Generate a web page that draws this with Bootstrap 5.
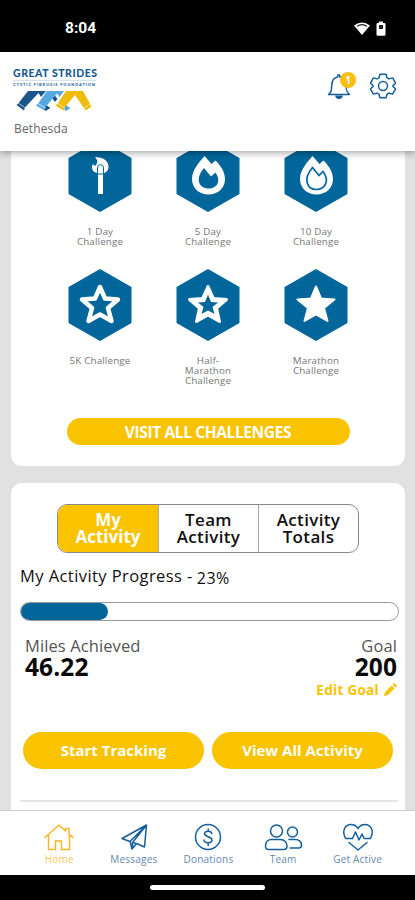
<!DOCTYPE html>
<html lang="en">
<head>
<meta charset="utf-8">
<meta name="viewport" content="width=device-width, initial-scale=1">
<title>Great Strides</title>
<link href="https://cdn.jsdelivr.net/npm/bootstrap@5.3.0/dist/css/bootstrap.min.css" rel="stylesheet">
<style>
:root{--gs-blue:#02669b;--gs-gold:#fac300;--gs-line:#145f99}
body{font-family:"Open Sans","Noto Sans",sans-serif;height:900px;color:#111;background:#e1e1e1}
svg{display:block;flex:none}
.status{height:52px;padding:5px 28px 0 65px;font:700 15.500px/1 Roboto,sans-serif}
.top-bar{height:99px;padding:15px 19px 0 13px;box-shadow:0 2px 7px rgba(0,0,0,.35);z-index:2}
.tools{margin-top:5px}
.chapter{font-size:12px;line-height:16px;margin:10px 0 0 1px;color:#666;letter-spacing:.15px}
.logo-name{font:900 10.5px/12px Lato,sans-serif;color:#175a92;letter-spacing:.55px}
.logo-sub{font:900 4px/5px Lato,sans-serif;color:#2a6699;letter-spacing:.88px;border-top:1px solid #d5e3ee;margin-top:1px;padding-top:1px;width:83px}
.bell{width:28px;height:28px;margin-right:15px}
.count{position:absolute;left:13px;top:0;width:16px;height:16px;font-size:10px;line-height:16px;background:#fdbd10}
.panel{margin:0 10px 0 11px;border-radius:11px}
.challenges{margin-top:-24px;height:339px;padding:12.5px 35px 0}
.cell-box{height:129.5px;font-size:9.8px;letter-spacing:.15px;line-height:10.2px;color:#777}
.cell-box span{margin-top:15px;width:56px}
.cell-box span.wide{width:80px}
.gold{background:var(--gs-gold);color:#fff;font-weight:700;border:0;padding:0}
.visit{width:283px;height:27px;font-size:15.500px;letter-spacing:-.37px;line-height:26px;margin-top:19.500px}
.activity{margin-top:17px;padding:20.5px 7px 0 9px;height:400px}
.tabs{width:302px;height:49px;margin:0 auto 0 37px;border:1px solid #888;border-radius:10px;font-size:17px;letter-spacing:.35px;line-height:17px;font-weight:600}
.tabs>div+div{border-left:1px solid #aaa}
.tabs .on{background:var(--gs-gold);color:#fff;font-weight:700;letter-spacing:0}
.prog-title{font-size:16.500px;letter-spacing:.42px;line-height:20px;margin-top:13px}
.pct{padding-top:2px;margin-left:4px;font-size:16px;letter-spacing:.5px}
.meter{height:19px;border:1px solid #999;border-radius:10px;margin-top:14.500px;background:#fff;margin-right:-1px}
.meter>div{background:var(--gs-blue);border-radius:10px}
.stats{padding:0 1px 0 5px;margin-top:15px;font-size:16.500px;letter-spacing:.1px;line-height:20px;color:#555}
.stats b{display:block;font-size:24.500px;line-height:22px;color:#0a0a0a}
.edit{font-size:13.500px;letter-spacing:.3px;font-weight:700;color:var(--gs-gold);line-height:18px;margin-top:3px}
.actions{margin:32.500px 5px 0 3px;gap:8px}
.actions .gold{height:37px;font-size:15px;line-height:36px}
.rule{height:2px;background:#e4e4e4;margin-top:31px}
.tab-bar{height:65px;border-top:1px solid #ccc;padding:11px 20px 0 22px;z-index:2;color:#6488ae;font-size:10px;letter-spacing:.2px}
.tab-bar .item{width:20%;line-height:13px}
.tab-bar svg{height:30px;margin-bottom:1px}
.line{fill:none;stroke:var(--gs-line);stroke-width:1.5;stroke-linejoin:round;stroke-linecap:round}
.home{color:#fbc85c}.home .line{stroke:#fbb625}
.gesture{height:25px;z-index:2}
.gesture div{width:115px;height:5px}
</style>
<script src="https://cdn.jsdelivr.net/npm/bootstrap@5.3.0/dist/js/bootstrap.bundle.min.js"></script>
</head>
<body class="d-flex flex-column overflow-hidden">
<div class="status bg-black text-white d-flex align-items-center justify-content-between flex-shrink-0">
  <span>8:04</span>
  <div class="d-flex gap-1 align-items-center">
    <svg width="18" height="16" viewBox="0 0 18 16"><path fill="#fff" d="M1 4.5Q9-1.5 17 4.5L9 14z"/><path d="M4 5.3Q9 2 14 5.3" stroke="#222" stroke-width="1.1" fill="none"/></svg>
    <svg width="12" height="16" viewBox="0 0 12 16"><path fill="#fff" d="M4 .5h4v1.5h1.2a1.3 1.3 0 0 1 1.3 1.3v10.2a1.3 1.3 0 0 1-1.3 1.3H2.8a1.3 1.3 0 0 1-1.3-1.3V3.3A1.3 1.3 0 0 1 2.8 2H4z"/><path fill="#222" d="M4 4h4v4H4z"/></svg>
  </div>
</div>
<header class="top-bar bg-white d-flex justify-content-between flex-shrink-0 position-relative">
  <div>
    <div class="logo-name text-nowrap">GREAT STRIDES</div>
    <div class="logo-sub text-nowrap">CYSTIC FIBROSIS FOUNDATION</div>
    <svg class="mt-1" width="84" height="20" viewBox="0 0 84 20">
      <path fill="#1b568b" d="M15 0h18l-5 6-2.500-4L12 16.500l-1 3L3.500 14l2.500-2.500z"/>
      <path fill="#1b568b" d="M32 13l5.500 4-5 3-3-3.500zM35 0h3.500l6 8-2.500 3-4-5.500z"/>
      <path fill="#56a8e2" d="M34 0h17l-4.500 6-2.500-3.500L32.500 16l-1 3.500-8.500-5 2.500-2.500z"/>
      <path fill="#56a8e2" d="M51 13l6.500 4-4.500 3-4-4z"/>
      <path fill="#efbc0b" d="M53 0h17l8.500 15.500-6 4L62 4 52 16l-1.500 3.500-8-5 2.500-2.500z"/>
      <path fill="none" stroke="#fff" stroke-width=".6" d="M4.500 11.500l8 5.500M24 12l8.500 5M44 12l8 5M70.500 17.500l7-4.500"/>
    </svg>
    <div class="chapter">Bethesda</div>
  </div>
  <div class="d-flex tools">
    <div class="bell position-relative">
      <svg width="28" height="28" viewBox="0 0 28 28"><path class="line" d="M1.500 22.500c3-2.500 3-4 3.200-9 .2-5 2.500-8 6-8.500V3.500q1-1.500 2 0V5c4 .5 6 4 6.200 8.500.2 5 .8 6.500 3.500 9z"/><path fill="#145f99" d="M8 23.500h8q-.8 3.500-4 3.500t-4-3.500z"/></svg>
      <span class="count rounded-circle text-white text-center fw-bold">1</span>
    </div>
    <svg width="26" height="28" viewBox="-13 -14 26 28"><circle class="line" r="4.500"/><path class="line" d="M-3-11.800h6l1 3.600 2 1.100 3.600-1 3 5.100L10-.5v1L12.600 3l-3 5.100-3.600-1-2 1.100-1 3.600h-6l-1-3.600-2-1.100-3.600 1-3-5.100L-10 .5v-1L-12.600-3l3-5.100 3.600 1 2-1.100z"/></svg>
  </div>
</header>
<main class="flex-grow-1 overflow-hidden" style="height:0">
  <section class="panel challenges bg-white">
    <div class="row g-0 text-center">
      <div class="col-4 cell-box d-flex flex-column align-items-center">
        <svg width="64" height="72" viewBox="0 0 64 72"><path fill="#02669b" d="M32 0l31.500 18v36L32 72 .5 54V18z"/><path fill="#fff" d="M27 17c8 0 14 4 13.500 10.500-.3 3-2 4.500-4.500 5.500v-3c0-6-7-6-7 0v3c-3-.6-5-2.500-5-5.500q0-2 1-3.500l2 2c2.500-2 3.500-5 0-9z"/><path fill="#fff" stroke="#02669b" d="M29.500 54.500V28q0-3.500 3-3.500t3 3.500v26.500z"/><path stroke="#02669b" d="M30 34h5"/></svg>
        <span>1 Day Challenge</span>
      </div>
      <div class="col-4 cell-box d-flex flex-column align-items-center">
        <svg width="64" height="72" viewBox="0 0 64 72"><path fill="#02669b" d="M32 0l31.500 18v36L32 72 .5 54V18z"/><path fill="#fff" d="M28.500 16l7 8 4-3.500C45 26 49 32 49 39c0 9-7 15.500-16.500 15.500S16 48 16 39c0-8.500 6.500-16 12.500-23z"/><path fill="#02669b" d="M28 28l7 8.500 4.500-4c6 9 1.500 16-7 16S18 40 28 28z"/></svg>
        <span>5 Day Challenge</span>
      </div>
      <div class="col-4 cell-box d-flex flex-column align-items-center">
        <svg width="64" height="72" viewBox="0 0 64 72"><path fill="#02669b" d="M32 0l31.500 18v36L32 72 .5 54V18z"/><path fill="#fff" d="M28.500 16l7 8 4-3.500C45 26 49 32 49 39c0 9-7 15.500-16.500 15.500S16 48 16 39c0-8.500 6.500-16 12.500-23z"/><path fill="#fff" stroke="#02669b" stroke-width="1.700" d="M28.500 27.500l6.500 8 4-4c7 9 2 18-6.500 18S18 40 28.500 27.500z"/></svg>
        <span>10 Day Challenge</span>
      </div>
      <div class="col-4 cell-box d-flex flex-column align-items-center">
        <svg width="64" height="72" viewBox="0 0 64 72"><path fill="#02669b" d="M32 0l31.500 18v36L32 72 .5 54V18z"/><path fill="none" stroke="#fff" stroke-width="4.500" stroke-linejoin="round" d="M32 18l5 11.500 13 1-10 8.500 3.500 13L32 45.500 20.500 52 24 39l-10-8.500 13-1z"/></svg>
        <span class="wide">5K Challenge</span>
      </div>
      <div class="col-4 cell-box d-flex flex-column align-items-center">
        <svg width="64" height="72" viewBox="0 0 64 72"><path fill="#02669b" d="M32 0l31.500 18v36L32 72 .5 54V18z"/><path fill="#fff" stroke="#fff" stroke-width="3" stroke-linejoin="round" d="M32 17.500l5.500 12 13 1-10 8.500 3 13.500L32 46l-11.500 6.500 3-13.500-10-8.500 13-1z"/><path fill="#02669b" d="M32 25.500l3 7.500 7 .5-5.500 4.500 2 7L32 41.500 25.500 45l2-7-5.500-4.500 7-.5z"/></svg>
        <span>Half-<br>Marathon Challenge</span>
      </div>
      <div class="col-4 cell-box d-flex flex-column align-items-center">
        <svg width="64" height="72" viewBox="0 0 64 72"><path fill="#02669b" d="M32 0l31.500 18v36L32 72 .5 54V18z"/><path fill="#fff" stroke="#fff" stroke-width="2" stroke-linejoin="round" d="M32 17.500l5 12 13.500 1-10.500 8.500 3.500 13L32 45.500 20.500 52 24 39l-10.500-8.500 13.500-1z"/></svg>
        <span>Marathon Challenge</span>
      </div>
    </div>
    <button class="btn gold visit rounded-pill d-block mx-auto">VISIT ALL CHALLENGES</button>
  </section>
  <section class="panel activity bg-white">
    <div class="tabs d-flex overflow-hidden text-center">
      <div class="on col-4 d-flex align-items-center justify-content-center">My<br>Activity</div>
      <div class="col-4 d-flex align-items-center justify-content-center">Team<br>Activity</div>
      <div class="col-4 d-flex align-items-center justify-content-center">Activity<br>Totals</div>
    </div>
    <div class="prog-title d-flex"><span>My Activity Progress -</span><span class="pct">23%</span></div>
    <div class="meter"><div class="h-100" style="width:23%"></div></div>
    <div class="stats d-flex justify-content-between">
      <div>Miles Achieved<b>46.22</b></div>
      <div class="text-end">Goal<b>200</b>
        <div class="edit d-flex align-items-center justify-content-end gap-1">Edit Goal <svg width="14" height="14" viewBox="0 0 14 14"><path fill="#fac300" d="M1 13l1-4 6.500-6.500 3 3L5 12zM9.500 1.500l1-1q.8-.6 1.500 0L13.500 2q.6.700 0 1.500l-1 1z"/></svg></div>
      </div>
    </div>
    <div class="actions d-flex">
      <button class="btn gold rounded-pill flex-fill w-50">Start Tracking</button>
      <button class="btn gold rounded-pill flex-fill w-50">View All Activity</button>
    </div>
    <div class="rule"></div>
  </section>
</main>
<nav class="tab-bar bg-white d-flex flex-shrink-0 text-center position-relative">
  <div class="item home d-flex flex-column align-items-center"><svg width="32" viewBox="0 0 32 30"><path class="line" d="M2 15.500L16 3l6.500 6V6.500H26V12l4 3.500M5.500 13v14.500h7V19h6v8.500h8V13"/></svg>Home</div>
  <div class="item d-flex flex-column align-items-center"><svg width="32" viewBox="0 0 32 30"><path class="line" d="M4 16.500L28.500 3l-2 22-8-3.500-4.500 5.500-2-7.500zM12 19.500L28.500 3 14.500 20.500V26M14.500 20.500l4 1"/></svg>Messages</div>
  <div class="item d-flex flex-column align-items-center"><svg width="32" viewBox="0 0 32 30"><circle class="line" cx="16" cy="15" r="12.500"/><path class="line" d="M19.800 11.500c-.5-3-7.300-3-7.300 0 0 4 7.500 2.500 7.500 6.500 0 3.500-7.800 3.500-8 0M16.200 7v2M16.200 21v2.500"/></svg>Donations</div>
  <div class="item d-flex flex-column align-items-center"><svg width="40" viewBox="0 0 40 30"><circle class="line" cx="13.500" cy="9" r="6"/><circle class="line" cx="29.500" cy="10" r="5"/><path class="line" d="M2.500 24c0-4.500 3-6.500 6-6.500h9c4 0 6.500 3 6.500 6.500 0 2.500-1 3.500-3 3.500H5.500c-2 0-3-1-3-3.500zM26 17.500h6.500c3.500 0 6 2.500 6 5.500 0 2-.8 3-2.500 3h-9"/></svg>Team</div>
  <div class="item d-flex flex-column align-items-center"><svg width="32" viewBox="0 0 32 30"><path class="line" d="M3.500 16.500C-.5 9 3 2.500 9 2.500c3 0 5.500 1.500 7 4 1.500-2.500 4-4 7-4 6 0 9.500 6.500 5.500 14H22l-2-4.500-3 6-3.500-8-3 6.500zM7 20.500l9 7.500 9-7.500"/></svg>Get Active</div>
</nav>
<div class="gesture bg-black d-flex align-items-center justify-content-center flex-shrink-0"><div class="bg-white rounded-pill"></div></div>
</body>
</html>
